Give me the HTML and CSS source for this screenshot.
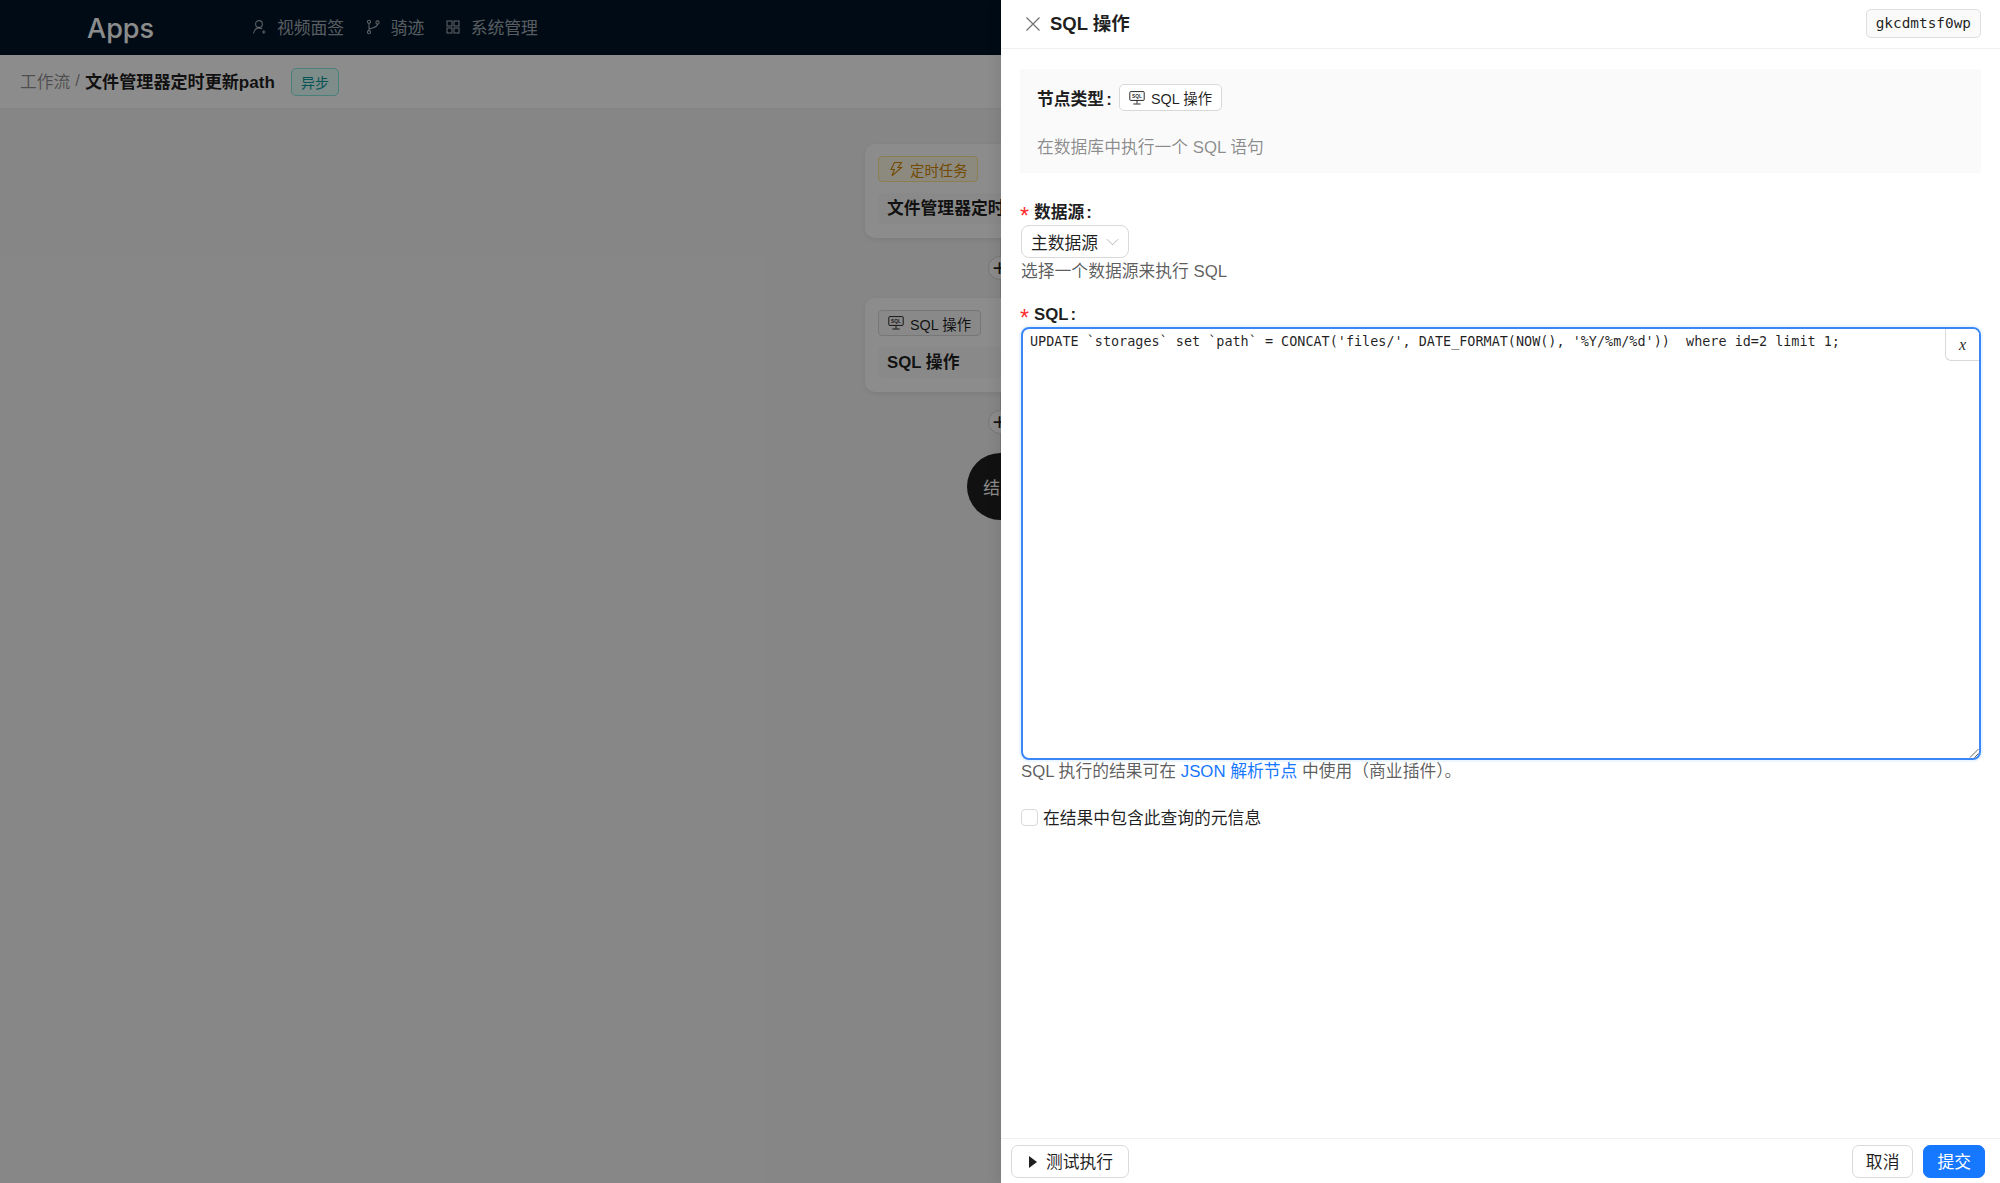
FILE: index.html
```html
<!DOCTYPE html>
<html lang="zh-CN">
<head>
<meta charset="utf-8">
<title>SQL 操作</title>
<link rel="stylesheet" href="styles.css">
</head>
<body>
<div class="app">
  <header class="topbar">
    <div class="logo">Apps</div>
    <nav class="menu">
      <span class="menu-item"><svg class="menu-icon" viewBox="0 0 16 16"><circle cx="8" cy="5" r="3.4"/><path d="M2.5 14.5c.4-3.300 2.500-5.400 5.500-5.600 1.200 0 2.300.3 3.200 1M11 13h3.500M12.800 11.300v3.400"/></svg>视频面签</span>
      <span class="menu-item"><svg class="menu-icon" viewBox="0 0 16 16"><circle cx="4" cy="2.800" r="1.600"/><circle cx="4" cy="13.200" r="1.600"/><circle cx="12.500" cy="3.500" r="1.600"/><path d="M4 4.400v7.200M12.500 5.100c0 3-3.500 3.500-8.500 5"/></svg>骑迹</span>
      <span class="menu-item"><svg class="menu-icon" viewBox="0 0 16 16"><rect x="2" y="2" width="5" height="5"/><rect x="9" y="2" width="5" height="5"/><rect x="2" y="9" width="5" height="5"/><rect x="9" y="9" width="5" height="5"/></svg>系统管理</span>
    </nav>
  </header>
  <div class="crumbbar">
    <span class="crumb-muted">工作流</span>
    <span class="crumb-sep">/</span>
    <strong class="crumb-title">文件管理器定时更新path</strong>
    <span class="tag-async">异步</span>
  </div>
  <main class="canvas">
    <section class="node">
      <span class="node-tag node-tag-gold"><svg class="tag-icon" viewBox="0 0 16 16"><path d="M6.500 1.500h7l-3.500 5h3.500L4 14.800l2.300-6.300H3z"/></svg>定时任务</span>
      <div class="node-title">文件管理器定时更新path</div>
    </section>
    <div class="connector"><span class="add-btn">+</span></div>
    <section class="node">
      <span class="node-tag"><svg class="tag-icon sql-icon" viewBox="0 0 20 18"><rect x="1" y="1" width="18" height="11" rx="1"/><path d="M10 12v4M5.500 16.500h9"/><text x="10" y="8.800" class="sql-icon-text">SQL</text></svg>SQL 操作</span>
      <div class="node-title">SQL 操作</div>
    </section>
    <div class="connector connector-long"><span class="add-btn">+</span></div>
    <div class="end-node">结束</div>
  </main>
</div>
<div class="mask"></div>
<aside class="drawer">
  <div class="drawer-head">
    <svg class="close-icon" viewBox="0 0 16 16"><path d="M1.500 1.500l13 13M14.500 1.500l-13 13"/></svg>
    <h1 class="drawer-title">SQL 操作</h1>
    <code class="node-key">gkcdmtsf0wp</code>
  </div>
  <div class="drawer-body">
    <div class="intro">
      <div class="intro-row">
        <b class="intro-label">节点类型<span class="colon">:</span></b>
        <span class="type-tag"><svg class="tag-icon sql-icon" viewBox="0 0 20 18"><rect x="1" y="1" width="18" height="11" rx="1"/><path d="M10 12v4M5.500 16.500h9"/><text x="10" y="8.800" class="sql-icon-text">SQL</text></svg>SQL 操作</span>
      </div>
      <p class="intro-desc">在数据库中执行一个 SQL 语句</p>
    </div>
    <div class="field">
      <label class="label"><i class="req">*</i>数据源<span class="colon">:</span></label>
      <div class="select">主数据源<svg class="chevron" viewBox="0 0 14 8"><path d="M1 1l6 6 6-6"/></svg></div>
      <div class="help">选择一个数据源来执行 SQL</div>
    </div>
    <div class="field field-sql">
      <label class="label"><i class="req">*</i>SQL<span class="colon">:</span></label>
      <div class="editor">
        <div class="code">UPDATE `storages` set `path` = CONCAT('files/', DATE_FORMAT(NOW(), '%Y/%m/%d'))  where id=2 limit 1;</div>
        <span class="var-btn">x</span>
        <svg class="grip" viewBox="0 0 10 10"><path d="M9.500 1L1 9.500M9.500 5.500L5.500 9.500"/></svg>
      </div>
      <div class="help">SQL 执行的结果可在 <a class="link">JSON 解析节点</a> 中使用（商业插件）。</div>
    </div>
    <label class="check"><span class="box"></span>在结果中包含此查询的元信息</label>
  </div>
  <footer class="drawer-foot">
    <span class="btn btn-test"><span class="play"></span>测试执行</span>
    <div class="foot-right">
      <span class="btn">取消</span>
      <span class="btn btn-primary">提交</span>
    </div>
  </footer>
</aside>
</body>
</html>
```
FILE: styles.css
```css
* { box-sizing: border-box; }
html, body { margin: 0; height: 100%; }
body {
  overflow: hidden;
  position: relative;
  font-family: "Liberation Sans", "Noto Sans CJK SC", sans-serif;
  font-size: 16.8px;
  color: rgba(0, 0, 0, .88);
  background: #fff;
}
.app { height: 1183px; display: flex; flex-direction: column; background: #fafafa; }
.topbar {
  height: 55px;
  background: #001529;
  display: flex;
  align-items: center;
  padding-left: 87px;
  flex: none;
}
.logo { font-family: "Inter", "Liberation Sans", sans-serif; font-weight: 500; font-size: 27px; color: #fff; width: 164px; line-height: 1; margin-top: 2px; }
.menu { display: flex; gap: 20.500px; margin-top: -2px; }
.menu-item { display: flex; align-items: center; gap: 10px; color: rgba(255, 255, 255, .65); font-size: 16.800px; }
.menu-icon { width: 16px; height: 16px; fill: none; stroke: rgba(255, 255, 255, .65); stroke-width: 1.100; }
.crumbbar {
  height: 54px;
  flex: none;
  background: #fff;
  border-bottom: 1px solid #efefef;
  display: flex;
  align-items: center;
  padding: 0 0 1px 20px;
  gap: 5px;
}
.crumb-muted, .crumb-sep { color: rgba(0, 0, 0, .45); }
.crumb-title { font-size: 17.100px; margin-bottom: 2px; }
.tag-async {
  margin: 1px 0 0 11px;
  height: 28px;
  padding: 0 9px;
  display: flex;
  align-items: center;
  font-size: 14px;
  color: #08979c;
  background: #e6fffb;
  border: 1px solid #87e8de;
  border-radius: 5px;
}
.canvas {
  flex: 1;
  background: #f5f5f5;
  display: flex;
  flex-direction: column;
  align-items: center;
  padding-top: 35px;
}
.node {
  width: 270px;
  height: 94px;
  background: #fff;
  border-radius: 10px;
  box-shadow: 0 2px 6px rgba(0, 0, 0, .08);
  padding: 12px 13px;
  flex: none;
}
.node-tag {
  display: inline-flex;
  align-items: center;
  height: 26px;
  padding: 0 9px;
  gap: 6px;
  font-size: 14.400px;
  color: rgba(0, 0, 0, .88);
  background: #fafafa;
  border: 1px solid #d9d9d9;
  border-radius: 4px;
  vertical-align: top;
}
.node-tag-gold { color: #d48806; background: #fffbe6; border-color: #ffe58f; }
.tag-icon { width: 16px; height: 16px; fill: none; stroke: currentColor; stroke-width: 1.100; flex: none; }
.sql-icon { stroke-width: 1.200; }
.sql-icon-text { font-size: 6px; font-weight: 700; text-anchor: middle; fill: currentColor; stroke: none; }
.node-title {
  margin-top: 11px;
  height: 31px;
  line-height: 31px;
  padding: 0 9px;
  font-size: 16.800px;
  font-weight: 700;
  white-space: nowrap;
  background: #fafafa;
  border-radius: 5px;
  margin-right: -1px;
  overflow: hidden;
}
.connector {
  width: 1px;
  height: 60px;
  background: #d9d9d9;
  position: relative;
  flex: none;
}
.connector-long { height: 61px; }
.add-btn {
  position: absolute;
  left: -12px;
  top: 18px;
  width: 24px;
  height: 24px;
  border-radius: 50%;
  border: 1px solid #d9d9d9;
  background: #fff;
  display: flex;
  align-items: center;
  justify-content: center;
  font-size: 24px;
  line-height: 1;
  color: rgba(0, 0, 0, .88);
}
.end-node {
  width: 67px;
  height: 67px;
  border-radius: 50%;
  background: #1f1f1f;
  color: #fff;
  display: flex;
  align-items: center;
  justify-content: center;
  flex: none;
}
.mask { position: absolute; inset: 0; background: rgba(0, 0, 0, .45); }
.drawer {
  position: absolute;
  top: 0;
  right: 0;
  bottom: 0;
  width: 999px;
  background: #fff;
  display: flex;
  flex-direction: column;
  box-shadow: -4px 0 12px rgba(0, 0, 0, .08);
}
.drawer-head {
  height: 49px;
  flex: none;
  border-bottom: 1px solid #f0f0f0;
  display: flex;
  align-items: center;
  padding: 0 19px 0 24px;
}
.close-icon { width: 16px; height: 16px; fill: none; stroke: rgba(0, 0, 0, .55); stroke-width: 1.300; flex: none; margin-right: 9px; }
.drawer-title { flex: 1; margin: 0; font-size: 18.500px; font-weight: 700; line-height: 1; }
.node-key {
  font-family: "DejaVu Sans Mono", monospace;
  font-size: 14.400px;
  height: 29px;
  line-height: 26px;
  padding: 0 9px;
  background: #fafafa;
  border: 1px solid #dedede;
  border-radius: 5px;
  margin-top: -1px;
  margin-bottom: 1px;
}
.drawer-body { flex: 1; padding: 20px 19px 0; min-height: 0; }
.intro { height: 104px; background: #fafafa; padding: 15px 17px 0 17px; }
.intro-row { display: flex; align-items: center; height: 27px; }
.intro-label { font-weight: 700; width: 82px; font-size: 16.800px; }
.colon { margin-left: 2px; }
.type-tag {
  display: inline-flex;
  align-items: center;
  gap: 6px;
  height: 27px;
  padding: 0 9px;
  font-size: 14.400px;
  background: #fff;
  border: 1px solid #d9d9d9;
  border-radius: 5px;
}
.intro-desc { margin: 25px 0 0; line-height: 24px; color: rgba(0, 0, 0, .45); font-size: 16.800px; }
.field { margin-top: 28px; padding-left: 1px; }
.field-sql { margin-top: 17px; }
.label { display: flex; align-items: center; height: 24px; line-height: 24px; font-weight: 700; font-size: 16.800px; }
.req { font-style: normal; font-weight: 400; font-size: 23px; color: #ff2d2f; width: 14px; margin-left: -1px; flex: none; line-height: 24px; padding-top: 6px; }
.select {
  width: 108px;
  height: 33px;
  padding: 0 9px;
  display: flex;
  align-items: center;
  justify-content: space-between;
  border: 1px solid #d9d9d9;
  border-radius: 8px;
  font-size: 16.800px;
  background: #fff;
}
.chevron { width: 13px; height: 8px; fill: none; stroke: rgba(0, 0, 0, .3); stroke-width: 1; flex: none; }
.help { height: 28px; line-height: 28px; color: rgba(0, 0, 0, .65); font-size: 16.800px; }
.field-sql .help { line-height: 24px; }
.link { color: #1677ff; }
.editor {
  position: relative;
  height: 433px;
  border: 2px solid #3a86f7;
  border-radius: 8px;
  box-shadow: 0 0 0 2px rgba(5, 145, 255, .08);
  padding: 3px 7px;
}
.code {
  font-family: "DejaVu Sans Mono", monospace;
  font-size: 13.460px;
  line-height: 20px;
  white-space: pre;
  color: rgba(0, 0, 0, .88);
}
.var-btn {
  position: absolute;
  top: 0;
  right: 0;
  width: 34px;
  height: 32px;
  display: flex;
  align-items: center;
  justify-content: center;
  border: 1px solid #d9d9d9;
  border-top: 0;
  border-right: 0;
  border-radius: 0 6px 0 6px;
  font-family: "Liberation Serif", serif;
  font-style: italic;
  font-size: 16px;
  background: #fff;
}
.grip { position: absolute; right: 0; bottom: 0; width: 10px; height: 10px; fill: none; stroke: #666; stroke-width: 1; }
.check { display: flex; align-items: center; gap: 5px; margin: 16px 0 0 1px; height: 26px; font-size: 16.800px; }
.box { width: 17px; height: 17px; border: 1px solid #d9d9d9; border-radius: 4px; background: #fff; flex: none; }
.drawer-foot {
  height: 45px;
  flex: none;
  border-top: 1px solid #f0f0f0;
  padding: 6px 15px 5px 10px;
  display: flex;
  justify-content: space-between;
  align-items: flex-start;
}
.foot-right { display: flex; gap: 10px; }
.btn {
  display: flex;
  align-items: center;
  justify-content: center;
  height: 33px;
  padding: 0 13px 2px;
  border: 1px solid #d9d9d9;
  border-radius: 7px;
  background: #fff;
  font-size: 16.800px;
  white-space: nowrap;
}
.btn-primary { background: #1677ff; border-color: #1677ff; color: #fff; }
.btn-test { width: 118px; gap: 9px; padding-left: 14px; justify-content: flex-start; }
.play {
  width: 0;
  height: 0;
  border-left: 8px solid rgba(0, 0, 0, .88);
  border-top: 6px solid transparent;
  border-bottom: 6px solid transparent;
  margin: 2px 0 0 3px;
}
```
